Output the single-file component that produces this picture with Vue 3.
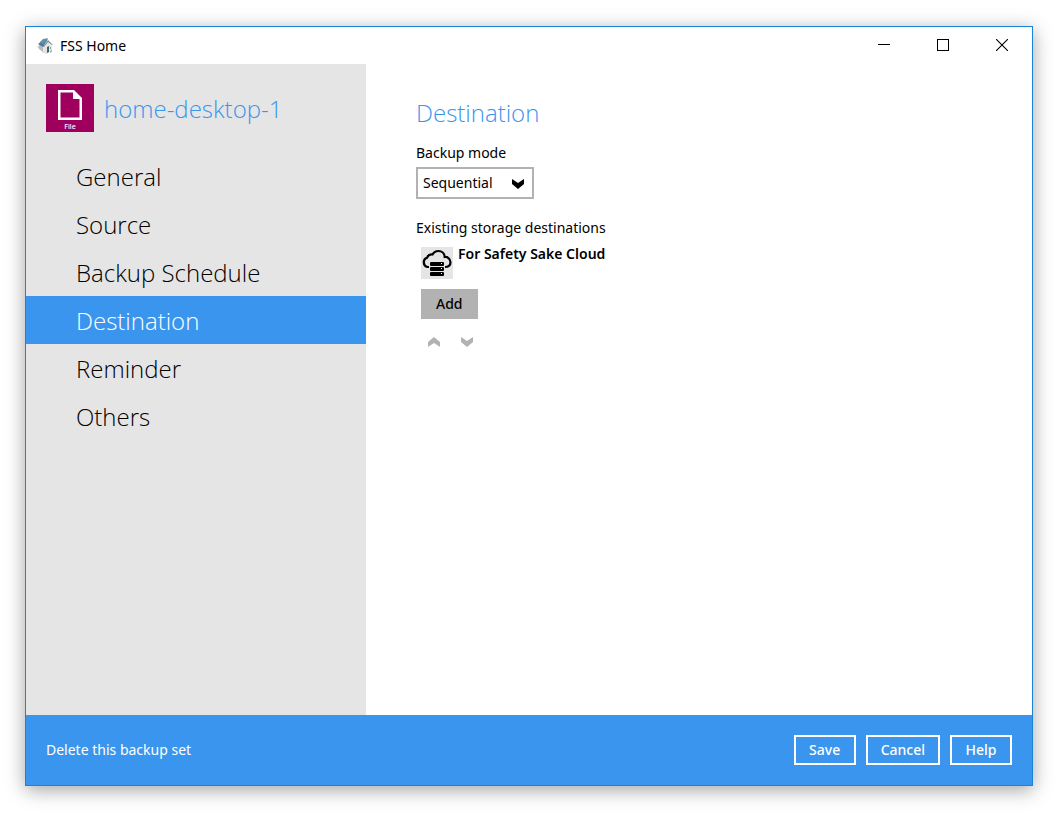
<script setup>
import { ref } from 'vue'

const sections = ['General', 'Source', 'Backup Schedule', 'Destination', 'Reminder', 'Others']
const current = ref('Destination')
const mode = ref('Sequential')
</script>

<template>
  <div class="desktop">
    <div class="window">
      <header class="titlebar">
        <svg class="app-icon" viewBox="0 0 16 16" aria-hidden="true">
          <path d="M0 9l3-2 11 6-5 3z" fill="#cfd2d1" />
          <path d="M2 7l5-1v9l-5-4z" fill="#b4babd" />
          <path d="M6 8l5-5 4 5v5l-6 2-3-1z" fill="#e4e6e4" />
          <path d="M1 6l5-4 5-1-5 8z" fill="#4f7c9c" />
          <path d="M3 4l3-3 5-1-5 6z" fill="#6491ae" />
          <path d="M6 9l5-7 5 5h-1l-4-3-4 5z" fill="#7b8a90" />
          <path d="M10 9l2-1v6l-2 1z" fill="#3f6668" />
          <path d="M13 9h1v2h-1z" fill="#8ba3ad" />
          <path d="M13 13l2-1v2l-2 1z" fill="#a9b8a6" />
        </svg>
        <span>FSS Home</span>
        <div class="window-controls">
          <button type="button" aria-label="Minimize">
            <svg viewBox="0 0 12 12" shape-rendering="crispEdges"><path d="M0 5h12v1H0z" /></svg>
          </button>
          <button type="button" aria-label="Maximize">
            <svg viewBox="0 0 12 12" shape-rendering="crispEdges"><path d="M0 0h12v12H0zM1 1v10h10V1z" fill-rule="evenodd" /></svg>
          </button>
          <button type="button" aria-label="Close">
            <svg viewBox="0 0 12 12"><path d="M0 0l12 12M12 0L0 12" fill="none" stroke="#000" stroke-width="1.1" /></svg>
          </button>
        </div>
      </header>

      <div class="body">
        <aside class="sidebar">
          <div class="backup-set">
            <div class="file-tile">
              <svg viewBox="0 0 24 30" aria-hidden="true">
                <path d="M0 0h16l8 8v22H0zM2.500 2.500v25h19V9H15V2.500z" fill="#fff" fill-rule="evenodd" />
              </svg>
              <span>File</span>
            </div>
            <h1>home-desktop-1</h1>
          </div>
          <nav>
            <a
              v-for="item in sections"
              :key="item"
              href="#"
              :class="{ active: item === current }"
              @click.prevent="current = item"
            >{{ item }}</a>
          </nav>
        </aside>

        <main class="content">
          <h2>Destination</h2>
          <label for="mode">Backup mode</label>
          <div class="select-box">
            <select id="mode" v-model="mode">
              <option>Sequential</option>
              <option>Concurrent</option>
            </select>
            <svg viewBox="0 0 12 10" aria-hidden="true"><path d="M0 0l6 4 6-4v5l-6 5-6-5z" /></svg>
          </div>

          <p class="list-label">Existing storage destinations</p>
          <div class="destinations">
            <div class="destination">
              <svg class="cloud" viewBox="0 0 32 32" aria-hidden="true">
                <path
                  d="M8 20H6.500A4.800 4.800 0 0 1 6 10.800A5 5 0 0 1 11.500 7.500C13 4.800 15.300 4 17.500 4C21 4 23.500 6.500 23.700 10C26 9.500 29.500 11.500 29.500 15.300C29.500 18.500 27.500 20 24 20"
                  fill="none" stroke="#000" stroke-width="2.200"
                />
                <rect x="8" y="14" width="16" height="16" fill="#e5e5e5" />
                <rect x="9" y="15" width="14" height="4" rx="1" />
                <rect x="9" y="20" width="14" height="4" rx="1" />
                <rect x="9" y="25" width="14" height="4" rx="1" />
                <path d="M20 16h1v1h-1zM20 21h1v1h-1zM20 26h1v1h-1z" fill="#fff" />
              </svg>
              <strong>For Safety Sake Cloud</strong>
            </div>
            <button type="button" class="add">Add</button>
            <div class="order">
              <button type="button" aria-label="Move up">
                <svg viewBox="0 0 12 10"><path d="M0 10l6-4 6 4V5L6 0 0 5z" /></svg>
              </button>
              <button type="button" aria-label="Move down">
                <svg viewBox="0 0 12 10"><path d="M0 0l6 4 6-4v5l-6 5-6-5z" /></svg>
              </button>
            </div>
          </div>
        </main>
      </div>

      <footer class="footer">
        <a href="#" @click.prevent>Delete this backup set</a>
        <div class="actions">
          <button type="button">Save</button>
          <button type="button">Cancel</button>
          <button type="button">Help</button>
        </div>
      </footer>
    </div>
  </div>
</template>

<style>
body {
  background: #fff;
}
</style>

<style scoped>
.desktop,
.desktop * {
  box-sizing: border-box;
}

.desktop {
  display: flex;
  min-height: 100vh;
  padding: 26px 27px 29px 25px;
  font: 14px/20px "Noto Sans", "Open Sans", sans-serif;
  color: #000;
}

button,
select {
  font: inherit;
  color: inherit;
  margin: 0;
  border: 0;
  border-radius: 0;
  background: none;
}

h1,
h2,
p {
  margin: 0;
}

h1,
h2,
nav {
  font-family: "Open Sans", "Noto Sans", sans-serif;
  font-size: 24px;
  line-height: 32px;
  font-weight: 300;
}

h1,
h2 {
  color: #3a95ee;
}

.window {
  flex: 1;
  display: flex;
  flex-direction: column;
  border: 1px solid #1883d7;
  background: #fff;
  box-shadow: 0 4px 18px rgba(0, 0, 0, 0.36);
}

.titlebar {
  display: flex;
  align-items: center;
  height: 37px;
  padding: 0 1px 0 11px;
}

.app-icon {
  width: 16px;
  height: 16px;
  margin-right: 7px;
}

.window-controls {
  display: flex;
  height: 100%;
  margin-left: auto;
}

.window-controls button {
  display: flex;
  align-items: center;
  justify-content: center;
  width: 59px;
  padding: 0 0 1px;
}

.window-controls svg {
  width: 12px;
  height: 12px;
}

.body {
  flex: 1;
  display: flex;
}

.sidebar {
  flex: 0 0 340px;
  background: #e5e5e5;
}

.backup-set {
  display: flex;
  gap: 10px;
  padding: 20px;
}

h1 {
  padding-top: 9px;
}

.file-tile {
  display: flex;
  flex-direction: column;
  align-items: center;
  gap: 3px;
  width: 48px;
  height: 48px;
  padding-top: 6px;
  background: #9f005d;
  color: #fff;
  font-size: 7px;
  line-height: 8px;
  font-weight: 500;
}

.file-tile svg {
  width: 24px;
  height: 30px;
}

nav a {
  display: block;
  padding: 2px 50px 0;
  line-height: 46px;
  color: #000;
  text-decoration: none;
}

nav .active {
  background: #3a95ee;
  color: #fff;
}

.content {
  flex: 1;
  padding: 33px 50px;
}

label,
.list-label {
  display: block;
}

h2 + label {
  margin-top: 14px;
}

.select-box {
  position: relative;
  width: 118px;
  margin: 4px 0 19px;
}

select {
  appearance: none;
  width: 100%;
  height: 32px;
  padding: 0 5px;
  border: 2px solid #b2b2b2;
  background: #fff;
}

.select-box svg {
  position: absolute;
  top: 12px;
  right: 10px;
  width: 12px;
  height: 10px;
  pointer-events: none;
}

.destinations {
  padding: 9px 5px;
}

.destination {
  display: flex;
  gap: 5px;
}

.destination strong {
  font-weight: 600;
  line-height: 14px;
}

.cloud {
  width: 32px;
  height: 32px;
  background: #e5e5e5;
}

.add {
  height: 30px;
  margin-top: 10px;
  padding: 0 15px;
  background: #b2b2b2;
  font-weight: 500;
}

.order {
  display: flex;
  gap: 7px;
  margin-top: 10px;
}

.order button {
  display: flex;
  align-items: center;
  justify-content: center;
  width: 26px;
  height: 26px;
  padding: 0;
}

.order svg {
  width: 12px;
  height: 10px;
  fill: #b2b2b2;
}

.footer {
  display: flex;
  align-items: center;
  justify-content: space-between;
  height: 70px;
  padding: 0 20px;
  background: #3a95ee;
  color: #fff;
}

.footer a {
  color: inherit;
  text-decoration: none;
}

.actions {
  display: flex;
  gap: 10px;
}

.actions button {
  min-width: 62px;
  height: 30px;
  padding: 0 13px;
  border: 2px solid #fff;
  font-weight: 500;
}
</style>
